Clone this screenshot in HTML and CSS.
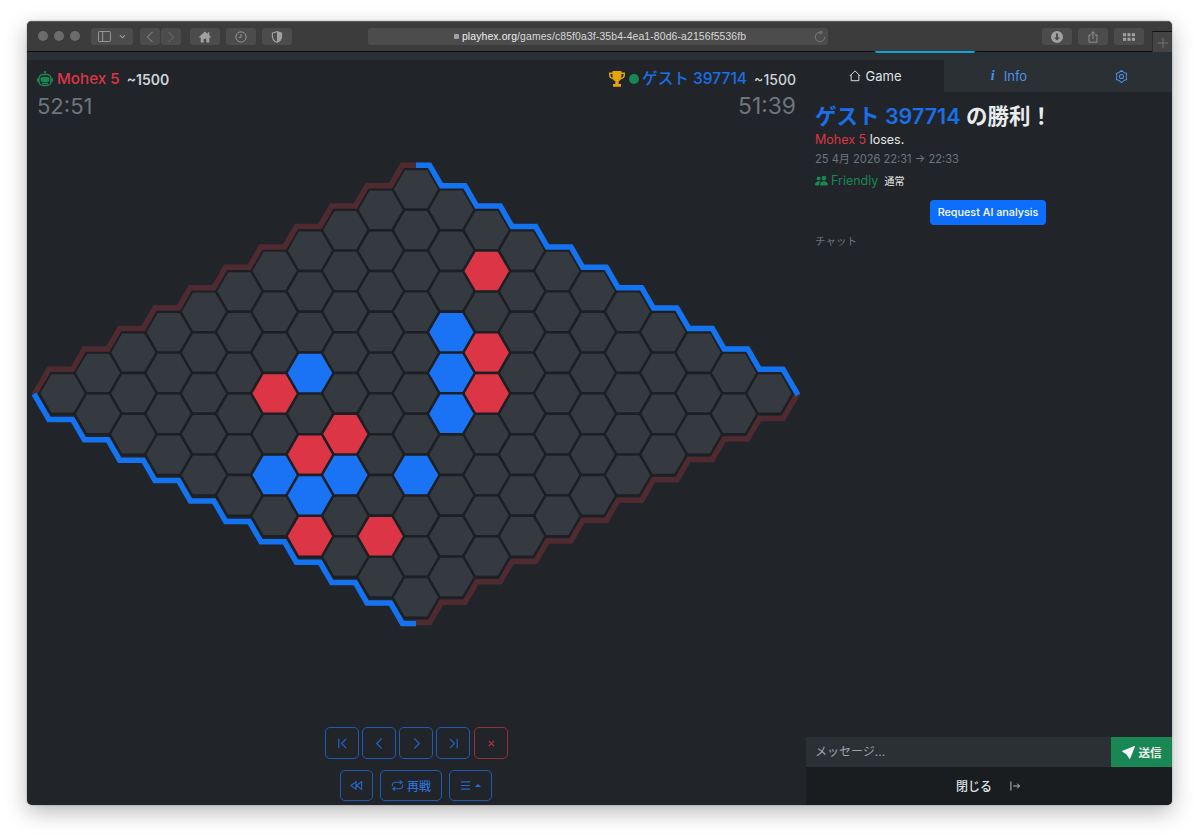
FILE: index.html
```html
<!DOCTYPE html>
<html lang="ja">
<head>
<meta charset="utf-8">
<title>playhex.org</title>
<link rel="stylesheet" href="styles.css">
</head>
<body>
<div class="window">
  <header class="titlebar">
    <div class="lights"><i></i><i></i><i></i></div>
    <div class="tb-btn sidebar-btn">
      <svg class="tb-icon" viewBox="0 0 14 12"><rect x=".5" y=".5" width="13" height="11" rx="1"/><path d="M5 .5v11"/></svg>
      <svg class="tb-chev" viewBox="0 0 8 5"><path d="M1 1l3 3 3-3"/></svg>
    </div>
    <div class="nav-pair">
      <div class="tb-btn nav-btn"><svg class="tb-icon" viewBox="0 0 8 14"><path d="M7 1L1 7l6 6"/></svg></div>
      <div class="tb-btn nav-btn dim"><svg class="tb-icon" viewBox="0 0 8 14"><path d="M1 1l6 6-6 6"/></svg></div>
    </div>
    <div class="tb-btn wide home-btn"><svg class="tb-fill" viewBox="0 0 14 13"><path d="M7 0L0 6.5l1 1L2 6.7V13h3.500V8.500h3V13H12V6.700l1 .8 1-1-2-1.900V1h-1.700v2z"/></svg></div>
    <div class="tb-btn wide"><svg class="tb-icon" viewBox="0 0 14 14"><circle cx="7" cy="7" r="6"/><path d="M7 3.500V7.500H4.500"/></svg></div>
    <div class="tb-btn wide"><svg class="tb-fill" viewBox="0 0 12 14"><path d="M6 0l6 2v4.500C12 10.500 9 13 6 14 3 13 0 10.500 0 6.500V2zm0 1.500L1.300 3v3.500C1.300 9.500 3.500 11.700 6 12.600z"/></svg></div>
    <div class="url">
      <span class="lock"></span><span class="url-text">playhex.org<span class="url-path">/games/c85f0a3f-35b4-4ea1-80d6-a2156f5536fb</span></span>
      <svg class="reload" viewBox="0 0 14 14"><path d="M7 1.500a5.500 5.500 0 1 0 5.500 5.500"/><path d="M7 0l3 1.500L7 3.500z"/></svg>
    </div>
    <div class="tb-btn wide"><svg class="tb-fill" viewBox="0 0 14 14"><path fill-rule="evenodd" d="M7 0a7 7 0 1 1 0 14A7 7 0 0 1 7 0zM5.800 3v4.500H3.500L7 11l3.500-3.500H8.200V3z"/></svg></div>
    <div class="tb-btn wide"><svg class="tb-icon" viewBox="0 0 12 15"><path d="M4 5H1v9h10V5H8"/><path d="M6 10V1M3.700 3.200L6 1l2.300 2.200"/></svg></div>
    <div class="tb-btn wide"><svg class="tb-fill" viewBox="0 0 14 9"><rect width="3.600" height="3.600"/><rect x="5.200" width="3.600" height="3.600"/><rect x="10.400" width="3.600" height="3.600"/><rect y="5.400" width="3.600" height="3.600"/><rect x="5.200" y="5.400" width="3.600" height="3.600"/><rect x="10.400" y="5.400" width="3.600" height="3.600"/></svg></div>
    <div class="newtab"><svg class="tb-icon" viewBox="0 0 11 11"><path d="M5.500 0v11M0 5.500h11"/></svg></div>
  </header>
  <div class="strip"><span class="progress"></span></div>

  <div class="content">
    <main class="game">
      <div class="players">
        <div class="player">
          <div class="player-line">
            <svg class="robot" viewBox="0 0 16 16"><path d="M8 .5v2" class="robot-s"/><circle cx="8" cy="1" r="1"/><rect x="2" y="3.500" width="12" height="11" rx="4" class="robot-s"/><rect x="3.500" y="6" width="9" height="5" rx="2"/><rect x="0" y="7" width="1.600" height="4" rx=".8"/><rect x="14.400" y="7" width="1.600" height="4" rx=".8"/><path d="M5 12.500h6" class="robot-s"/></svg>
            <span class="name red-text">Mohex 5</span>
            <span class="rating">~1500</span>
          </div>
          <div class="clock">52:51</div>
        </div>
        <div class="player player-right">
          <div class="player-line">
            <svg class="trophy" viewBox="0 0 16 16"><path d="M3.500 0h9v1.500H16V4c0 2.500-1.800 4-4 4.300-.6 1-1.400 1.700-2.300 2V13H12v2.800H4V13h2.300v-2.700c-.9-.3-1.700-1-2.300-2C1.800 8 0 6.500 0 4V1.500h3.500zM1.500 3v1c0 1.400.8 2.400 2.200 2.800-.2-1-.2-2.500-.2-3.800zm13 0h-2c0 1.300 0 2.800-.2 3.800 1.400-.4 2.200-1.400 2.200-2.800z"/></svg>
            <span class="online"></span>
            <span class="name blue-text">ゲスト 397714</span>
            <span class="rating">~1500</span>
          </div>
          <div class="clock">51:39</div>
        </div>
      </div>

      <svg class="board" viewBox="27 119.400 779 600">
        <defs>
          <polygon id="h" points="23.56,0 11.78,20.4 -11.78,20.4 -23.56,0 -11.78,-20.4 11.78,-20.4"/>
          <g id="row">
            <use href="#h" x="0" y="0"/><use href="#h" x="35.34" y="20.4"/><use href="#h" x="70.68" y="40.8"/><use href="#h" x="106.02" y="61.2"/><use href="#h" x="141.36" y="81.6"/><use href="#h" x="176.7" y="102"/><use href="#h" x="212.04" y="122.4"/><use href="#h" x="247.38" y="142.8"/><use href="#h" x="282.72" y="163.2"/><use href="#h" x="318.06" y="183.6"/><use href="#h" x="353.4" y="204"/>
          </g>
        </defs>
        <g class="cells">
          <use href="#row" x="416" y="188.8"/>
          <use href="#row" x="380.66" y="209.2"/>
          <use href="#row" x="345.32" y="229.6"/>
          <use href="#row" x="309.98" y="250"/>
          <use href="#row" x="274.64" y="270.4"/>
          <use href="#row" x="239.3" y="290.8"/>
          <use href="#row" x="203.96" y="311.2"/>
          <use href="#row" x="168.62" y="331.6"/>
          <use href="#row" x="133.28" y="352"/>
          <use href="#row" x="97.94" y="372.4"/>
          <use href="#row" x="62.6" y="392.8"/>
        </g>
        <g class="stones red">
          <use href="#h" x="486.68" y="270.4"/>
          <use href="#h" x="486.68" y="352"/>
          <use href="#h" x="486.68" y="392.8"/>
          <use href="#h" x="274.64" y="392.8"/>
          <use href="#h" x="345.32" y="433.6"/>
          <use href="#h" x="309.98" y="454"/>
          <use href="#h" x="309.98" y="535.6"/>
          <use href="#h" x="380.66" y="535.6"/>
        </g>
        <g class="stones blue">
          <use href="#h" x="451.34" y="331.6"/>
          <use href="#h" x="451.34" y="372.4"/>
          <use href="#h" x="451.34" y="413.2"/>
          <use href="#h" x="309.98" y="372.4"/>
          <use href="#h" x="274.64" y="474.4"/>
          <use href="#h" x="345.32" y="474.4"/>
          <use href="#h" x="416" y="474.4"/>
          <use href="#h" x="309.98" y="494.8"/>
        </g>
        <path class="edge edge-red" d="M416 164.700h-13.600l-11.800 20.400h-23.540l-11.800 20.400h-23.540l-11.800 20.400h-23.540l-11.800 20.400h-23.540l-11.800 20.400h-23.540l-11.800 20.400h-23.540l-11.800 20.400h-23.540l-11.800 20.400h-23.540l-11.800 20.400h-23.540l-11.800 20.400h-23.540l-15 25.600"/>
        <path class="edge edge-red" d="M798 392.400l-15 25.600 h-23.540 l-11.800 20.400 h-23.540 l-11.800 20.400 h-23.540 l-11.800 20.400 h-23.540 l-11.800 20.400 h-23.540 l-11.800 20.400 h-23.540 l-11.800 20.400 h-23.540 l-11.800 20.400 h-23.540 l-11.800 20.400 h-23.540 l-11.800 20.400 h-23.540 l-11.800 20.400 H416"/>
        <path class="edge edge-blue" d="M416 164.700h13.600l11.800 20.400h23.540l11.800 20.400h23.540l11.800 20.400h23.540l11.800 20.400h23.540l11.800 20.400h23.540l11.800 20.400h23.540l11.800 20.400h23.540l11.800 20.400h23.540l11.800 20.400h23.540l11.800 20.400h23.540l15 25.600"/>
        <path class="edge edge-blue" d="M34 393.200l15 25.600h23.540l11.800 20.400h23.540l11.800 20.400h23.540l11.800 20.400h23.540l11.800 20.400h23.540l11.800 20.400h23.540l11.800 20.400h23.540l11.800 20.400h23.540l11.800 20.400h23.540l11.800 20.400h23.540l11.800 20.400H416"/>
      </svg>

      <div class="controls">
        <div class="ctl-row">
          <button class="ctl"><svg class="ctl-icon" viewBox="0 0 14 14"><path d="M3 2v10M11 2L6 7l5 5"/></svg></button>
          <button class="ctl"><svg class="ctl-icon" viewBox="0 0 14 14"><path d="M9.500 1.500L4 7l5.500 5.500"/></svg></button>
          <button class="ctl"><svg class="ctl-icon" viewBox="0 0 14 14"><path d="M4.500 1.500L10 7l-5.500 5.500"/></svg></button>
          <button class="ctl"><svg class="ctl-icon" viewBox="0 0 14 14"><path d="M11 2v10M3 2l5 5-5 5"/></svg></button>
          <button class="ctl ctl-danger"><svg class="ctl-x" viewBox="0 0 8 8"><path d="M1 1l6 6M7 1L1 7"/></svg></button>
        </div>
        <div class="ctl-row ctl-row-2">
          <button class="ctl ctl-2"><svg class="ctl-icon" viewBox="0 0 14 10"><path d="M6.500 1L1 5l5.500 4zM12.500 1L7 5l5.500 4z"/></svg></button>
          <button class="ctl ctl-rematch"><svg class="ctl-icon" viewBox="0 0 14 14"><path d="M1.500 8V6.500a3 3 0 0 1 3-3h7M9.500 1.500l2.500 2-2.500 2M12.500 6v1.500a3 3 0 0 1-3 3h-7M4.500 8.500L2 10.500l2.500 2"/></svg><span>再戦</span></button>
          <button class="ctl ctl-menu"><svg class="ctl-icon" viewBox="0 0 12 12"><path d="M1 2h10M1 6h10M1 10h10"/></svg><span class="caret"></span></button>
        </div>
      </div>
    </main>

    <aside class="panel">
      <nav class="tabs">
        <div class="tab tab-game"><svg class="tab-icon" viewBox="0 0 14 14"><path d="M1 7l6-6 6 6M2.500 6v6.500h9V6"/></svg><span>Game</span></div>
        <div class="tab tab-info"><span class="info-i">i</span><span>Info</span></div>
        <div class="tab tab-gear"><svg class="gear" viewBox="0 0 14 14"><polygon points="7,.5 9.500,2.670 12.600,3.750 12,7 12.600,10.250 9.500,11.330 7,13.500 4.500,11.330 1.400,10.250 2,7 1.400,3.750 4.500,2.670"/><circle cx="7" cy="7" r="2.200"/></svg></div>
      </nav>
      <div class="summary">
        <h1 class="winner"><span class="blue-text">ゲスト 397714</span> の勝利！</h1>
        <p class="loses"><span class="red-text">Mohex 5</span> loses.</p>
        <p class="dates">25 4月 2026 22:31 → 22:33</p>
        <p class="mode">
          <svg class="people" viewBox="0 0 16 16"><path d="M7 14s-1 0-1-1 1-4 5-4 5 3 5 4-1 1-1 1H7Zm4-6a3 3 0 1 0 0-6 3 3 0 0 0 0 6Zm-5.784 6A2.238 2.238 0 0 1 5 13c0-1.355.68-2.750 1.936-3.720A6.325 6.325 0 0 0 5 9c-4 0-5 3-5 4s1 1 1 1h4.216ZM4.500 8a2.500 2.500 0 1 0 0-5 2.500 2.500 0 0 0 0 5Z"/></svg>
          <span class="friendly">Friendly</span><span class="tag">通常</span>
        </p>
        <div class="ai-row"><button class="ai-btn">Request AI analysis</button></div>
        <p class="chat-title">チャット</p>
      </div>
      <form class="chat-form">
        <div class="chat-input">メッセージ...</div>
        <button class="send" type="button"><svg class="send-icon" viewBox="0 0 16 16"><path d="M15.964.686a.5.5 0 0 0-.65-.65L.767 5.855H.766l-.452.18a.5.5 0 0 0-.082.887l.41.26.001.002 4.995 3.178 3.178 4.995.002.002.26.41a.5.5 0 0 0 .886-.083l6-15Z"/></svg><span>送信</span></button>
      </form>
      <div class="close-row"><span>閉じる</span><svg class="close-icon" viewBox="0 0 11 11"><path d="M1 .5v10M3.500 5.500h7M8 3l2.500 2.500L8 8"/></svg></div>
    </aside>
  </div>
</div>
</body>
</html>
```

FILE: styles.css
```css
* { box-sizing: border-box; }
html, body { margin: 0; height: 100%; }
body {
  background: #fff;
  padding: 21px 27px 0;
  font-family: Inter, "Noto Sans CJK JP", "Noto Sans", sans-serif;
  color: #fff;
  overflow: hidden;
}
p, h1 { margin: 0; }
button { font-family: inherit; cursor: pointer; }

.window {
  width: 1145px;
  height: 784px;
  display: flex;
  flex-direction: column;
  border-radius: 5px;
  overflow: hidden;
  background: #212529;
  box-shadow: 0 7px 22px rgba(0, 0, 0, .28), 0 0 2px rgba(0, 0, 0, .35);
}

/* browser chrome */
.titlebar {
  height: 31px;
  flex: none;
  display: flex;
  align-items: flex-start;
  padding-top: 6px;
  padding-left: 11px;
  background: #3c3c3c;
  border-top: 1px solid #5b5b5b;
  border-bottom: 1px solid #0e0e0e;
}
.lights { display: flex; gap: 6px; margin-top: 3px; margin-right: 11px; }
.lights i { display: block; width: 10px; height: 10px; border-radius: 50%; background: #6c6c6c; }
.tb-btn {
  height: 17px;
  display: flex;
  align-items: center;
  justify-content: center;
  background: #4c4c4c;
  border-radius: 3px;
  flex: none;
}
.tb-icon { width: 12px; height: 12px; fill: none; stroke: #a0a0a0; stroke-width: 1; }
.tb-fill { width: 12px; height: 12px; fill: #a0a0a0; }
.sidebar-btn { width: 42px; gap: 8px; margin-right: 7px; }
.sidebar-btn .tb-icon { width: 13px; height: 11px; }
.tb-chev { width: 7px; height: 5px; fill: none; stroke: #a0a0a0; stroke-width: 1.200; }
.nav-pair { display: flex; gap: 1px; margin-right: 9px; }
.nav-btn { width: 20px; }
.nav-btn .tb-icon { width: 8px; height: 12px; }
.nav-btn.dim .tb-icon { stroke: #747474; }
.wide { width: 30px; margin-right: 6px; }
.url {
  width: 463px;
  margin-left: 70px;
  margin-right: 214px;
  padding-left: 4px;
  height: 17px;
  background: #4c4c4c;
  border-radius: 3px;
  display: flex;
  align-items: center;
  justify-content: center;
  position: relative;
  font-size: 10.400px;
  font-weight: 500;
  font-family: "Liberation Sans", sans-serif;
  letter-spacing: .13px;
}
.lock { width: 5px; height: 5px; background: #a0a0a0; border-radius: 1px; margin-right: 3px; }
.url-text { color: #f0f0f0; }
.url-path { color: #d8d8d8; }
.reload { position: absolute; right: 2px; top: 3px; width: 12px; height: 12px; fill: none; stroke: #808080; stroke-width: 1; }
.newtab {
  width: 20px;
  height: 23px;
  margin-left: 2px;
  margin-top: 3px;
  display: flex;
  align-items: center;
  justify-content: center;
  border-top: 1px solid #111;
  border-left: 1px solid #2c2c2c;
  background: #444;
}
.newtab .tb-icon { width: 10px; height: 10px; stroke: #777; }

.strip { height: 8px; flex: none; background: #2b3035; position: relative; }
.progress { position: absolute; left: 848px; top: -1px; width: 100px; height: 2px; background: #11a3d6; border-radius: 0 0 2px 2px; }

.content { flex: 1; min-height: 0; display: flex; }

/* game column */
.game { width: 779px; flex: none; display: flex; flex-direction: column; }
.players {
  height: 60px;
  flex: none;
  display: flex;
  justify-content: space-between;
  padding: 7px 10px 0;
}
.player-line { display: flex; align-items: center; height: 24px; }
.player-right { text-align: right; }
.player-right .player-line { justify-content: flex-end; }
.name { font-size: 15.200px; font-weight: 500; line-height: 24px; }
.player-right .name { font-size: 15.600px; }
.red-text { color: #dc3545; }
.blue-text { color: #1a6fe8; }
.rating { font-size: 14px; font-weight: 600; color: #ced4da; margin-left: 7px; }
.player-right .rating { font-weight: 500; }
.clock { font-size: 22px; color: #6c757d; line-height: 30px; }
.player-right .clock { font-size: 22.800px; }
.robot { width: 16px; height: 16px; fill: #198754; margin-right: 4px; }
.robot .robot-s { fill: none; stroke: #198754; stroke-width: 1.500; }
.trophy { width: 16px; height: 16px; fill: #e5a50a; margin-right: 4px; }
.online { width: 10px; height: 10px; border-radius: 50%; background: #198754; margin-right: 3px; }

.board { display: block; width: 779px; height: 600px; flex: none; }
.cells { fill: #343a40; }
.stones, .cells { stroke: #1c1f23; stroke-width: 2.400; }
.stones.red { fill: #dc3545; }
.stones.blue { fill: #1a73f5; }
.edge { fill: none; stroke-width: 5.500; stroke-linejoin: miter; }
.edge-red { stroke: #502a31; }
.edge-blue { stroke: #1473f0; }

.controls { display: flex; flex-direction: column; align-items: center; gap: 11px; padding-top: 7px; }
.ctl-row { display: flex; gap: 3px; }
.ctl-row-2 { gap: 7px; margin-right: 1px; }
.ctl {
  width: 34px;
  height: 32px;
  padding: 0;
  background: transparent;
  border: 1px solid #1e5bb5;
  border-radius: 5px;
  color: #2b6fd6;
  display: flex;
  align-items: center;
  justify-content: center;
  gap: 3px;
  font-size: 12px;
  font-weight: 500;
}
.ctl-row-2 .ctl { height: 31px; }
.ctl-row-2 .ctl-2 { width: 33px; }
.ctl-icon { width: 13px; height: 13px; fill: none; stroke: #2467c8; stroke-width: 1.200; }
.ctl-danger { border-color: #96303c; margin-left: 1px; }
.ctl-x { width: 7px; height: 7px; fill: none; stroke: #c0323f; stroke-width: 1.300; }
.ctl-row-2 .ctl-rematch { width: 62px; }
.ctl-row-2 .ctl-menu { width: 43px; gap: 4px; }
.ctl-menu .ctl-icon { width: 11px; height: 11px; }
.caret { width: 0; height: 0; border-left: 3px solid transparent; border-right: 3px solid transparent; border-bottom: 3px solid #2b6fd6; }

/* side panel */
.panel { flex: 1; display: flex; flex-direction: column; min-width: 0; }
.tabs { height: 32px; flex: none; display: flex; background: #2b3035; }
.tab { display: flex; align-items: center; justify-content: center; gap: 5px; font-size: 13px; }
.tab-game { width: 138px; background: #212529; color: #dee2e6; }
.tab-info { width: 130px; color: #4f8fe6; gap: 9px; }
.tab-gear { flex: 1; }
.info-i { font-family: "Liberation Serif", serif; font-style: italic; font-weight: 700; font-size: 14px; }
.tab-icon { width: 12px; height: 12px; fill: none; stroke: #e6e6e6; stroke-width: 1.100; }
.gear { width: 13px; height: 13px; fill: none; stroke: #4f8fe6; stroke-width: 1.100; stroke-linejoin: round; margin-left: -4px; }

.summary { flex: 1; padding: 9px 9px 0; min-height: 0; }
.winner { font-size: 21.500px; font-weight: 600; line-height: 30px; color: #e9ecef; }
.winner .blue-text { color: #1a6fe8; }
.loses { font-size: 12.500px; line-height: 17px; color: #e2e5e8; }
.dates { font-size: 11.100px; line-height: 16px; color: #6c757d; margin-top: 3px; }
.mode { display: flex; align-items: center; margin-top: 3px; height: 20px; }
.people { width: 13px; height: 13px; fill: #198754; margin-right: 3px; }
.friendly { font-size: 12.500px; color: #198754; }
.tag { font-size: 10px; color: #e9ecef; margin-left: 6px; }
.ai-row { display: flex; justify-content: flex-end; margin-top: 10px; padding-right: 117px; }
.ai-btn {
  width: 116px;
  height: 25px;
  padding: 0;
  flex: none;
  border: 0;
  border-radius: 4px;
  background: #0d6efd;
  color: #fff;
  font-size: 10.800px;
  font-weight: 500;
}
.chat-title { font-size: 10.500px; color: #6c757d; margin-top: 9px; line-height: 16px; }

.chat-form { height: 30px; flex: none; display: flex; }
.chat-input {
  flex: 1;
  background: #2b3035;
  color: #a0a5aa;
  font-size: 12px;
  line-height: 30px;
  padding-left: 9px;
}
.send {
  width: 61px;
  border: 0;
  padding: 0;
  background: #198754;
  color: #eee;
  display: flex;
  align-items: center;
  justify-content: center;
  gap: 4px;
  font-size: 11.500px;
  font-weight: 700;
}
.send-icon { width: 13px; height: 13px; fill: #fff; }
.close-row {
  height: 38px;
  flex: none;
  background: #1a1d20;
  display: flex;
  align-items: center;
  justify-content: center;
  gap: 18px;
  padding-right: 2px;
  padding-bottom: 1px;
  font-size: 12px;
  font-weight: 500;
  color: #dee2e6;
}
.close-icon { width: 10px; height: 10px; fill: none; stroke: #c8c8c8; stroke-width: 1; }
```
